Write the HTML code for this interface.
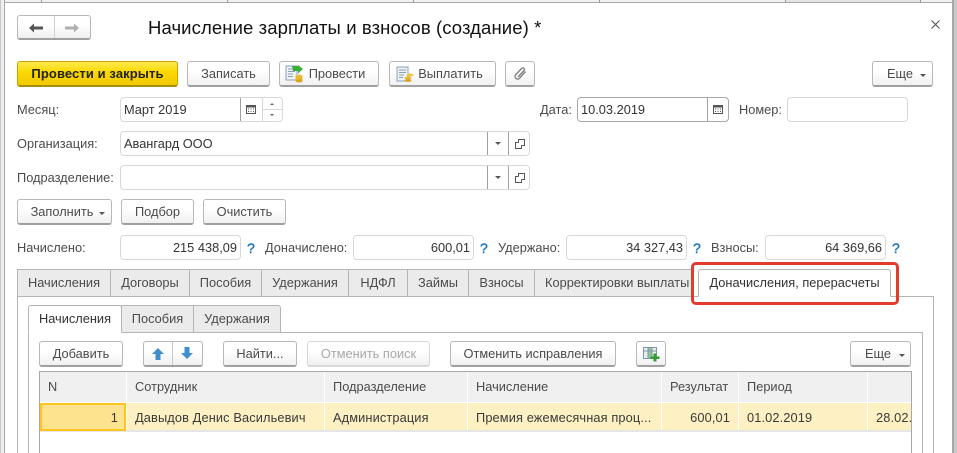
<!DOCTYPE html>
<html><head><meta charset="utf-8">
<style>
html,body{margin:0;padding:0;width:957px;height:453px;overflow:hidden;background:#fff}
body{position:relative;font-family:"Liberation Sans",Arial,sans-serif;font-size:12.8px;color:#4b4b4b}
div,svg{position:absolute;box-sizing:border-box}
.t{white-space:nowrap;line-height:14px}
.b{border:1px solid #b8b8b8;border-bottom:2px solid #a0a0a0;border-radius:3px;background:linear-gradient(#fff 40%,#f0f0f0);text-align:center;line-height:23px;white-space:nowrap;height:26px}
.i{border:1px solid #d8d8d8;border-radius:4px;background:#fff;height:25px}
.v{width:1px;background:#a0a0a0}
.n{text-align:right;line-height:23px;color:#333;padding-right:3px;white-space:nowrap}
.q{color:#1b75bc;font-size:14px;line-height:16px;-webkit-text-stroke:.4px #1b75bc}
.tab{height:28px;border:1px solid #b4b4b4;border-bottom:1px solid #b4b4b4;background:#ebebeb;text-align:center;line-height:25px;white-space:nowrap;top:269px}
.it{top:305px;height:28px;line-height:26px;border:1px solid #b4b4b4;background:#ebebeb;text-align:center;white-space:nowrap}
.h{top:372px;height:30px;background:#f0f0f0;line-height:29px;padding-left:8px;white-space:nowrap}
.r{top:403px;height:27px;background:#fdf0c3;line-height:29px;padding-left:8px;white-space:nowrap;color:#3a3a3a;overflow:hidden;letter-spacing:.12px}
.ar{width:0;height:0;border-left:3px solid transparent;border-right:3px solid transparent;border-top:3px solid #555}
</style></head><body>
<!-- window frame -->
<div style="left:0;top:0;width:957px;height:3px;background:#f1f1f1;border-bottom:1px solid #a8a8a8"></div>
<div style="left:785px;top:0;width:135px;height:3px;background:#e4e4e4;border-bottom:1px solid #a8a8a8"></div>
<div style="left:41px;top:0;width:1px;height:3px;background:#999"></div>
<div style="left:227px;top:0;width:1px;height:3px;background:#999"></div>
<div style="left:413px;top:0;width:1px;height:3px;background:#999"></div>
<div style="left:599px;top:0;width:1px;height:3px;background:#999"></div>
<div style="left:785px;top:0;width:1px;height:3px;background:#999"></div>
<div style="left:920px;top:0;width:1px;height:3px;background:#999"></div>
<div style="left:0;top:0;width:5px;height:453px;background:#efefef;border-left:1px solid #c8c8c8;border-right:1px solid #a8a8a8"></div>
<div style="left:952px;top:0;width:5px;height:453px;background:#c8c8c8;border-left:2px solid #a8a8a8"></div>

<!-- nav -->
<div class="b" style="left:17px;top:15px;width:74px;height:25px"></div>
<div style="left:54px;top:16px;width:1px;height:22px;background:#d0d0d0"></div>
<svg style="left:28px;top:21px" width="16" height="14" viewBox="0 0 16 14"><path d="M1 7l5-4.500V5.500h9v3H6v3z" fill="#555"/></svg>
<svg style="left:64px;top:21px" width="16" height="14" viewBox="0 0 16 14"><path d="M15 7l-5-4.500V5.500H1v3h9v3z" fill="#b0b0b0"/></svg>
<div style="left:148px;top:17px;font-size:18.500px;line-height:22px;color:#111;white-space:nowrap;letter-spacing:.1px">Начисление зарплаты и взносов (создание) *</div>
<svg style="left:930px;top:19px" width="11" height="11" viewBox="0 0 11 11"><path d="M1.500 1.500l8 8M9.500 1.500l-8 8" stroke="#555" stroke-width="1.100" fill="none"/></svg>

<!-- command bar -->
<div class="b" style="left:17px;top:61px;width:161px;background:linear-gradient(#fdea50,#fbd800 45%,#f2c900);border-color:#c9a400;border-bottom-color:#a88e10;color:#222;font-weight:bold;font-size:13px;letter-spacing:.1px">Провести и закрыть</div>
<div class="b" style="left:187px;top:61px;width:83px">Записать</div>
<div class="b" style="left:279px;top:61px;width:100px;padding-left:16px">Провести</div>
<svg style="left:285px;top:65px" width="19" height="18" viewBox="0 0 19 18"><rect x="1" y="1" width="11" height="14" fill="#eef3f8" stroke="#8aa0b5"/><path d="M3 4h7M3 6.500h7M3 9h5M3 11.500h5" stroke="#8aa0b5"/><path d="M7 1h6V0l5 4-5 4.500V6H8z" fill="#3cae3c"/><ellipse cx="14" cy="11" rx="3.500" ry="1.500" fill="#eec040"/><rect x="10.500" y="11" width="7" height="5" fill="#e8b830"/><ellipse cx="14" cy="16" rx="3.500" ry="1.500" fill="#d9a520"/></svg>
<div class="b" style="left:389px;top:61px;width:107px;padding-left:16px">Выплатить</div>
<svg style="left:396px;top:66px" width="19" height="17" viewBox="0 0 19 17"><rect x="1" y="1" width="11" height="14" fill="#eef3f8" stroke="#8aa0b5"/><path d="M3 4h7M3 6.500h7M3 9h5M3 11.500h4" stroke="#8aa0b5"/><ellipse cx="14" cy="9" rx="3.500" ry="1.500" fill="#f0c440"/><ellipse cx="12" cy="12" rx="3.500" ry="1.500" fill="#e8b830"/><ellipse cx="12" cy="14.500" rx="3.500" ry="1.500" fill="#d9a520"/></svg>
<div class="b" style="left:505px;top:61px;width:30px"></div>
<svg style="left:513px;top:66px" width="15" height="15" viewBox="0 0 15 15"><path d="M5 11L11 4.500a1.600 1.600 0 0 0-2.500-2L2.500 9a2.600 2.600 0 0 0 4 3.300L12.500 5.500" stroke="#808080" stroke-width="1.400" fill="none"/></svg>
<div class="b" style="left:872px;top:61px;width:61px;padding-right:5px">Еще</div>
<div class="ar" style="left:920px;top:74px"></div>

<!-- month -->
<div class="t" style="left:17px;top:103px">Месяц:</div>
<div class="i" style="left:120px;top:97px;width:163px"></div>
<div class="t" style="left:124px;top:103px;color:#333">Март 2019</div>
<div class="v" style="left:240px;top:98px;height:23px"></div>
<div style="left:262px;top:98px;width:1px;height:23px;background:#d8d8d8"></div>
<div style="left:263px;top:109px;width:19px;height:1px;background:#d8d8d8"></div>
<svg style="left:246px;top:104px" width="10" height="10" viewBox="0 0 10 10"><path d="M.500 1.500h9v8h-9z" fill="#fff" stroke="#555"/><rect x="0" y="1" width="10" height="2.500" fill="#555"/><path d="M2 5h1M4.500 5h1M7 5h1M2 7.500h1M4.500 7.500h1M7 7.500h1" stroke="#555"/></svg>
<div style="left:270px;top:103px;width:0;height:0;border-left:2px solid transparent;border-right:2px solid transparent;border-bottom:2px solid #666"></div>
<div style="left:270px;top:114px;width:0;height:0;border-left:2px solid transparent;border-right:2px solid transparent;border-top:2px solid #666"></div>

<div class="t" style="left:540px;top:103px">Дата:</div>
<div class="i" style="left:577px;top:97px;width:152px;border-color:#a8a8a8"></div>
<div class="t" style="left:581px;top:103px;color:#333">10.03.2019</div>
<div class="v" style="left:707px;top:98px;height:23px"></div>
<svg style="left:713px;top:104px" width="10" height="10" viewBox="0 0 10 10"><path d="M.500 1.500h9v8h-9z" fill="#fff" stroke="#555"/><rect x="0" y="1" width="10" height="2.500" fill="#555"/><path d="M2 5h1M4.500 5h1M7 5h1M2 7.500h1M4.500 7.500h1M7 7.500h1" stroke="#555"/></svg>
<div class="t" style="left:739px;top:103px">Номер:</div>
<div class="i" style="left:787px;top:97px;width:121px"></div>

<!-- org -->
<div class="t" style="left:17px;top:137px">Организация:</div>
<div class="i" style="left:120px;top:131px;width:410px"></div>
<div class="t" style="left:124px;top:137px;color:#333">Авангард ООО</div>
<div class="v" style="left:487px;top:132px;height:23px"></div>
<div class="v" style="left:508px;top:132px;height:23px"></div>
<div class="ar" style="left:495px;top:142px"></div>
<svg style="left:515px;top:139px" width="10" height="10" viewBox="0 0 10 10"><path d="M3.500 3.500v-3h6v6h-3M3.500 3.500h-3v6h6v-3" fill="none" stroke="#555"/></svg>

<div class="t" style="left:17px;top:171px">Подразделение:</div>
<div class="i" style="left:120px;top:165px;width:410px"></div>
<div class="v" style="left:487px;top:166px;height:23px"></div>
<div class="v" style="left:508px;top:166px;height:23px"></div>
<div class="ar" style="left:495px;top:176px"></div>
<svg style="left:515px;top:173px" width="10" height="10" viewBox="0 0 10 10"><path d="M3.500 3.500v-3h6v6h-3M3.500 3.500h-3v6h6v-3" fill="none" stroke="#555"/></svg>

<!-- fill buttons -->
<div class="b" style="left:17px;top:199px;width:95px;padding-right:5px">Заполнить</div>
<div class="ar" style="left:99px;top:212px"></div>
<div class="b" style="left:121px;top:199px;width:73px">Подбор</div>
<div class="b" style="left:203px;top:199px;width:83px">Очистить</div>

<!-- sums -->
<div class="t" style="left:17px;top:241px">Начислено:</div>
<div class="i n" style="left:120px;top:235px;width:121px">215 438,09</div>
<div class="q" style="left:247px;top:240px">?</div>
<div class="t" style="left:265px;top:241px">Доначислено:</div>
<div class="i n" style="left:353px;top:235px;width:121px">600,01</div>
<div class="q" style="left:480px;top:240px">?</div>
<div class="t" style="left:498px;top:241px">Удержано:</div>
<div class="i n" style="left:566px;top:235px;width:121px">34 327,43</div>
<div class="q" style="left:693px;top:240px">?</div>
<div class="t" style="left:711px;top:241px">Взносы:</div>
<div class="i n" style="left:765px;top:235px;width:121px">64 369,66</div>
<div class="q" style="left:892px;top:240px">?</div>

<!-- main tabs -->
<div style="left:17px;top:296px;width:917px;height:157px;border:1px solid #b4b4b4;border-bottom:none;background:#fff"></div>
<div class="tab" style="left:17px;width:94px">Начисления</div>
<div class="tab" style="left:110px;width:80px">Договоры</div>
<div class="tab" style="left:189px;width:73px">Пособия</div>
<div class="tab" style="left:261px;width:88px">Удержания</div>
<div class="tab" style="left:348px;width:60px">НДФЛ</div>
<div class="tab" style="left:407px;width:62px">Займы</div>
<div class="tab" style="left:468px;width:67px">Взносы</div>
<div class="tab" style="left:534px;width:158px;border-right:none;text-align:left;padding-left:10px">Корректировки выплаты</div>
<div class="tab" style="left:698px;width:193px;background:#fff;border-bottom:1px solid #fff;border-radius:3px 3px 0 0;color:#333">Доначисления, перерасчеты</div>
<div style="left:691px;top:262px;width:208px;height:43px;border:3px solid #e53a2e;border-radius:5px"></div>

<!-- inner tabs -->
<div style="left:28px;top:332px;width:895px;height:121px;border:1px solid #b4b4b4;border-bottom:none;background:#fff"></div>
<div class="it" style="left:121px;width:73px">Пособия</div>
<div class="it" style="left:193px;width:88px;border-radius:0 3px 0 0">Удержания</div>
<div class="it" style="left:28px;width:94px;background:#fff;border-bottom:1px solid #fff;border-radius:3px 3px 0 0;color:#333">Начисления</div>

<!-- inner buttons -->
<div class="b" style="left:39px;top:341px;width:84px">Добавить</div>
<div class="b" style="left:143px;top:341px;width:60px"></div>
<div style="left:172px;top:342px;width:1px;height:23px;background:#c8c8c8"></div>
<svg style="left:151px;top:347px" width="14" height="14" viewBox="0 0 14 14"><path d="M7 1l6 6H9.500v6h-5V7H1z" fill="#3d8fd0"/></svg>
<svg style="left:180px;top:346px" width="14" height="14" viewBox="0 0 14 14"><path d="M7 13l6-6H9.500V1h-5v6H1z" fill="#3d8fd0"/></svg>
<div class="b" style="left:223px;top:341px;width:74px">Найти...</div>
<div class="b" style="left:307px;top:341px;width:123px;color:#a8a8a8;border-color:#d8d8d8">Отменить поиск</div>
<div class="b" style="left:450px;top:341px;width:166px">Отменить исправления</div>
<div class="b" style="left:636px;top:341px;width:30px"></div>
<svg style="left:643px;top:347px" width="17" height="15" viewBox="0 0 17 15"><rect x=".5" y=".5" width="13" height="11" fill="#e8eef4" stroke="#7f97ad"/><rect x="5" y="1" width="4" height="10" fill="#8cc48c"/><path d="M1 4h12M5 1v10M9 1v10" stroke="#7f97ad"/><path d="M11 7h3v3h3v2.500h-3V15h-3v-2.500H8V10h3z" fill="#2f9e2f" transform="translate(-.5 -.5)"/></svg>
<div class="b" style="left:850px;top:341px;width:61px;padding-right:5px">Еще</div>
<div class="ar" style="left:899px;top:354px"></div>

<!-- table -->
<div style="left:39px;top:371px;width:873px;height:82px;border:1px solid #a8a8a8;border-bottom:none;background:#fff"></div>
<div class="h" style="left:40px;width:86px">N</div>
<div class="h" style="left:127px;width:197px">Сотрудник</div>
<div class="h" style="left:325px;width:142px">Подразделение</div>
<div class="h" style="left:468px;width:193px">Начисление</div>
<div class="h" style="left:662px;width:76px">Результат</div>
<div class="h" style="left:739px;width:128px">Период</div>
<div class="h" style="left:868px;width:43px"></div>
<div style="left:40px;top:430px;width:871px;height:2px;background:#e6e6e6"></div>
<div class="r" style="left:40px;width:86px;height:28px;background:#fee38f;border:2px solid #fcc520;text-align:right;padding:0 6px 0 0;line-height:25px">1</div>
<div class="r" style="left:127px;width:197px">Давыдов Денис Васильевич</div>
<div class="r" style="left:325px;width:142px">Администрация</div>
<div class="r" style="left:468px;width:193px">Премия ежемесячная проц...</div>
<div class="r" style="left:662px;width:76px;text-align:right;padding:0 8px 0 0">600,01</div>
<div class="r" style="left:739px;width:128px">01.02.2019</div>
<div class="r" style="left:868px;width:43px">28.02.</div>
</body></html>
